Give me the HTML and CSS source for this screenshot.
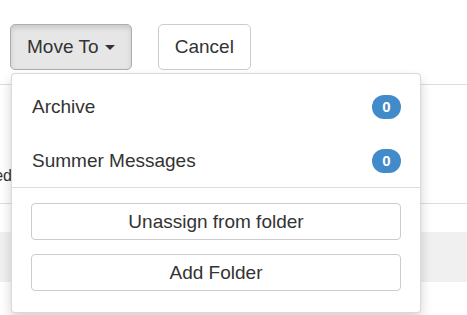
FILE: index.html
```
<!DOCTYPE html>
<html lang="en">
<head>
    <meta charset="UTF-8">
    <title>Move To</title>
    <link rel="stylesheet" href="styles.css">
</head>
<body>
    <div class="toolbar">
        <div class="btn-group">
            <button class="btn btn-active">Move To <span class="caret"></span></button>
            <div class="dropdown-menu">
                <div class="folder-item">
                    <span>Archive</span>
                    <span class="badge">0</span>
                </div>
                <div class="folder-item">
                    <span>Summer Messages</span>
                    <span class="badge">0</span>
                </div>
                <div class="divider"></div>
                <div class="menu-actions">
                    <button class="btn btn-block">Unassign from folder</button>
                    <button class="btn btn-block">Add Folder</button>
                </div>
            </div>
        </div>
        <button class="btn">Cancel</button>
    </div>

    <div class="list">
        <div class="row row-first">
            <div class="cell-clip"><span>Archived</span></div>
        </div>
        <div class="row row-plain"></div>
        <div class="row row-striped"></div>
        <div class="row row-plain row-last"></div>
    </div>
</body>
</html>
```

FILE: styles.css
```
body {
    margin: 0;
    min-height: 315px;
    font-family: "Liberation Sans", Arial, sans-serif;
    color: #333;
    background: #fff;
}
.toolbar {
    display: flex;
    gap: 26px;
    padding: 24px 10px 0;
    margin-bottom: 14px;
}
.btn-group {
    position: relative;
}
.btn {
    font-family: inherit;
    font-size: 19px;
    line-height: 24px;
    color: #333;
    background: #fff;
    border: 1px solid #ccc;
    border-radius: 5px;
    padding: 10px 16px;
    cursor: pointer;
}
.btn-active {
    background: #e6e6e6;
    border-color: #adadad;
    box-shadow: inset 0 3px 5px rgba(0,0,0,0.125);
}
.caret {
    display: inline-block;
    width: 0;
    height: 0;
    margin-left: 1px;
    vertical-align: middle;
    border-top: 5px solid #333;
    border-left: 5px solid transparent;
    border-right: 5px solid transparent;
}
.dropdown-menu {
    position: absolute;
    top: 100%;
    left: 1px;
    margin-top: 3px;
    width: 408px;
    padding: 5px 0;
    background: #fff;
    border: 1px solid rgba(0,0,0,0.15);
    border-radius: 4px;
    box-shadow: 0 6px 12px rgba(0,0,0,0.175);
    z-index: 10;
}
.folder-item {
    display: flex;
    justify-content: space-between;
    align-items: center;
    padding: 16px 19px 14px 20px;
    font-size: 19px;
    line-height: 24px;
}
.badge {
    min-width: 29px;
    height: 24px;
    box-sizing: border-box;
    border-radius: 12px;
    background: #428bca;
    color: #fff;
    font-size: 15px;
    font-weight: bold;
    line-height: 24px;
    text-align: center;
}
.divider {
    height: 1px;
    background: #ddd;
}
.menu-actions {
    display: flex;
    flex-direction: column;
    gap: 14px;
    padding: 15px 19px 16px;
}
.btn-block {
    width: 100%;
    padding: 6px 12px;
    line-height: 23px;
    border-radius: 4px;
}
.list {
    border-top: 1px solid #ddd;
}
.row-first {
    height: 118px;
    display: flex;
    align-items: flex-end;
    border-bottom: 1px solid #ddd;
}
.cell-clip {
    width: 12px;
    overflow: hidden;
    display: flex;
    justify-content: flex-end;
    white-space: nowrap;
    font-size: 16px;
    margin-bottom: 18px;
}
.row-plain {
    height: 28px;
}
.row-striped {
    height: 50px;
    background: #f0f0f0;
}
.row-last {
    height: 40px;
}
```
